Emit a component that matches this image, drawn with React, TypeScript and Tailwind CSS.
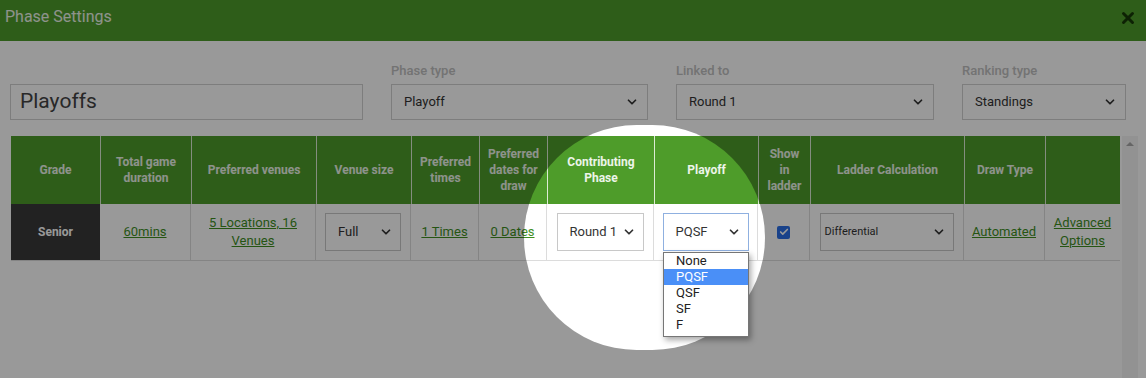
import { ChevronDown, Check, X } from 'lucide-react';

const font = { fontFamily: 'Roboto, "Liberation Sans", sans-serif' };

const cols =
  'grid-cols-[89px_91px_125px_95px_68px_68px_107px_104px_52px_154px_81px_75px]';

const headers = [
  'Grade',
  'Total game duration',
  'Preferred venues',
  'Venue size',
  'Preferred times',
  'Preferred dates for draw',
  'Contributing Phase',
  'Playoff',
  'Show in ladder',
  'Ladder Calculation',
  'Draw Type',
  '',
];

function FieldSelect({ value, className = '' }: { value: string; className?: string }) {
  return (
    <div
      className={`flex h-[36px] items-center justify-between border border-[#d0d0d0] pl-[12px] pr-[8px] text-[13px] text-[#333] ${className}`}
    >
      <span>{value}</span>
      <ChevronDown className="h-[14px] w-[14px] text-[#333]" strokeWidth={3} />
    </div>
  );
}

function CellSelect({
  value,
  className = '',
  small = false,
}: {
  value: string;
  className?: string;
  small?: boolean;
}) {
  return (
    <div
      className={`flex h-[38px] items-center justify-between border bg-white pr-[7px] text-[#333] ${
        small ? 'pl-[4px] text-[11px]' : 'pl-[12px] text-[13px]'
      } ${className}`}
    >
      <span>{value}</span>
      <ChevronDown className="h-[14px] w-[14px] text-[#333]" strokeWidth={3} />
    </div>
  );
}

function Link({ children }: { children: React.ReactNode }) {
  return <span className="text-[13px] leading-[18px] text-[#3e8e1f] underline">{children}</span>;
}

export default function App() {
  return (
    <div style={font} className="relative h-[378px] w-[1146px] overflow-hidden bg-white">
      {/* Title bar */}
      <div className="flex h-[41px] items-start justify-between bg-[#4e9c2a] pl-[5px] pr-[9px] pt-[7px]">
        <span className="text-[16px] leading-[20px] text-white/90">Phase Settings</span>
        <X className="mt-[2px] h-[18px] w-[18px] text-[#173a08]" strokeWidth={4} />
      </div>

      {/* Form row */}
      <div className="flex items-end pl-[10px] pt-[21px]">
        <div className="flex h-[36px] w-[353px] items-center border border-[#d0d0d0] pl-[9px] text-[21px] text-[#444]">
          Playoffs
        </div>
        <div className="ml-[28px] w-[257px]">
          <div className="mb-[5px] text-[13px] font-medium leading-[17px] text-[#c0c0c0]">Phase type</div>
          <FieldSelect value="Playoff" />
        </div>
        <div className="ml-[28px] w-[258px]">
          <div className="mb-[5px] text-[13px] font-medium leading-[17px] text-[#c0c0c0]">Linked to</div>
          <FieldSelect value="Round 1" />
        </div>
        <div className="ml-[28px] w-[164px]">
          <div className="mb-[5px] text-[13px] font-medium leading-[17px] text-[#c0c0c0]">Ranking type</div>
          <FieldSelect value="Standings" />
        </div>
      </div>

      {/* Table + scrollbar */}
      <div className="mt-[16px] flex">
        <div className="ml-[11px]">
          <div className={`grid h-[68px] ${cols} bg-[#4e9c2a]`}>
            {headers.map((h, i) => (
              <div
                key={i}
                className={`flex items-center justify-center px-[6px] text-center text-[12px] font-bold leading-[16px] text-white/90 ${
                  i > 0 ? 'border-l border-white/80' : ''
                }`}
              >
                {h}
              </div>
            ))}
          </div>
          <div className={`grid h-[57px] ${cols} border-b border-[#dcdcdc]`}>
            <div className="flex items-center justify-center bg-[#3a3a3a] text-[12px] font-bold text-white">
              Senior
            </div>
            <div className="flex items-center justify-center border-r border-[#dcdcdc]">
              <Link>60mins</Link>
            </div>
            <div className="flex items-center justify-center border-r border-[#dcdcdc] text-center">
              <Link>
                5 Locations, 16
                <br />
                Venues
              </Link>
            </div>
            <div className="flex items-center justify-center border-r border-[#dcdcdc]">
              <CellSelect value="Full" className="w-[76px] border-[#c8c8c8]" />
            </div>
            <div className="flex items-center justify-center border-r border-[#dcdcdc]">
              <Link>1 Times</Link>
            </div>
            <div className="flex items-center justify-center border-r border-[#dcdcdc]">
              <Link>0 Dates</Link>
            </div>
            <div className="flex items-center justify-center border-r border-[#dcdcdc]">
              <CellSelect value="Round 1" className="w-[87px] border-[#c8c8c8]" />
            </div>
            <div className="flex items-center justify-center border-r border-[#dcdcdc]">
              <CellSelect value="PQSF" className="w-[86px] border-[#8fb0e0]" />
            </div>
            <div className="flex items-center justify-center border-r border-[#dcdcdc]">
              <div className="flex h-[13px] w-[13px] items-center justify-center rounded-[2px] bg-[#2a6fe6]">
                <Check className="h-[10px] w-[10px] text-white" strokeWidth={4} />
              </div>
            </div>
            <div className="flex items-center justify-center border-r border-[#dcdcdc]">
              <CellSelect value="Differential" small className="w-[134px] border-[#c8c8c8]" />
            </div>
            <div className="flex items-center justify-center border-r border-[#dcdcdc]">
              <Link>Automated</Link>
            </div>
            <div className="flex items-center justify-center text-center">
              <Link>
                Advanced
                <br />
                Options
              </Link>
            </div>
          </div>
        </div>
        <div className="ml-[2px] flex h-[242px] w-[16px] justify-center bg-[#f3f3f3] pt-[6px]">
          <div className="h-0 w-0 border-x-[4px] border-b-[4px] border-x-transparent border-b-[#a8a8a8]" />
        </div>
      </div>

      {/* Spotlight overlay */}
      <div className="pointer-events-none absolute left-[524px] top-[125px] h-[225px] w-[241px] rounded-full shadow-[0_0_0_2000px_rgba(0,0,0,0.4)]" />

      {/* Open native-like dropdown list */}
      <div className="absolute left-[663px] top-[252px] w-[86px] border border-[#767676] bg-white pb-[3px] shadow-[2px_3px_6px_rgba(0,0,0,0.35)]">
        {['None', 'PQSF', 'QSF', 'SF', 'F'].map((o) => (
          <div
            key={o}
            className={`h-[16px] pl-[12px] text-[13px] leading-[16px] ${
              o === 'PQSF' ? 'bg-[#4a8ff7] text-white' : 'text-[#222]'
            }`}
          >
            {o}
          </div>
        ))}
      </div>
    </div>
  );
}
